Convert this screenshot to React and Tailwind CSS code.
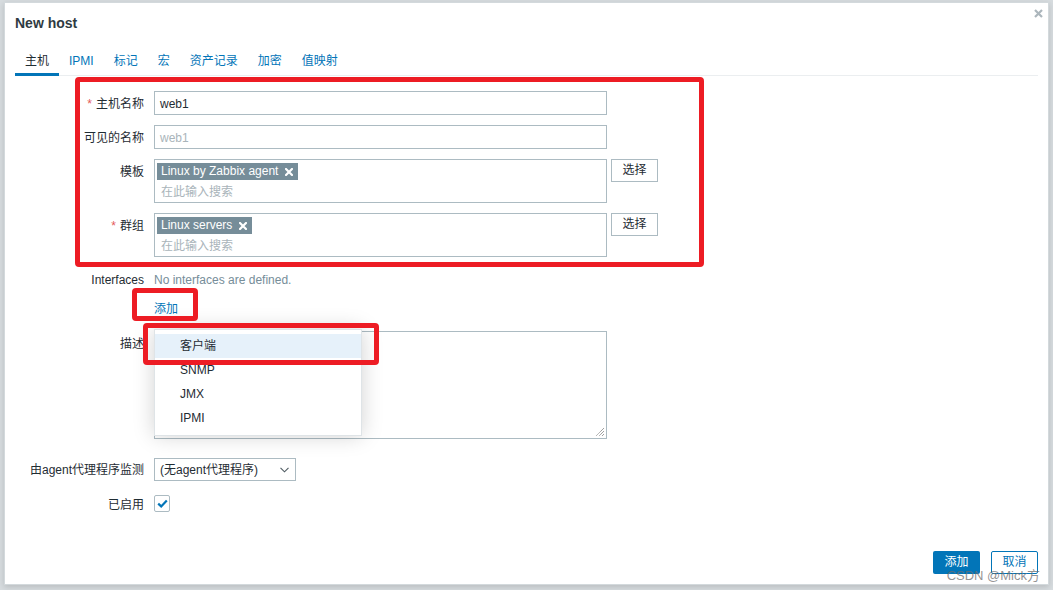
import React from 'react';

const Label = ({ children, required, className = '' }) => (
  <div className={`w-[129px] shrink-0 text-right leading-[16px] ${className}`}>
    {required && <span className="text-[#e45959] mr-[4px]">*</span>}
    {children}
  </div>
);

const Chip = ({ text }) => (
  <span className="inline-flex items-center h-[17px] bg-[#768d99] text-white pl-[4px] pr-[5px] leading-[17px]">
    {text}
    <svg width="8" height="8" viewBox="0 0 8 8" className="ml-[7px]">
      <path d="M1 1L7 7M7 1L1 7" stroke="white" strokeWidth="2.2" strokeLinecap="square" />
    </svg>
  </span>
);

const MultiSelect = ({ chip }) => (
  <div className="flex">
    <div className="w-[453px] h-[44px] border border-[#acbbc2] pt-[2px] pl-[2px]">
      <Chip text={chip} />
      <div className="pl-[4px] pt-[4px] leading-[16px] text-[#a9b4ba]">在此输入搜索</div>
    </div>
    <button className="ml-[4px] w-[47px] h-[23px] border border-[#acbbc2] bg-white text-[#1f2c33] leading-[21px]">
      选择
    </button>
  </div>
);

const RedBox = ({ className }) => (
  <div className={`absolute border-[5px] border-[#ed1c24] rounded-[4px] ${className}`} />
);

export default function App() {
  const tabs = ['主机', 'IPMI', '标记', '宏', '资产记录', '加密', '值映射'];
  const menu = ['客户端', 'SNMP', 'JMX', 'IPMI'];

  return (
    <div className="w-[1053px] h-[590px] overflow-hidden bg-[#d7dcdf] pt-[2px] pl-[4px] font-['Liberation_Sans','Noto_Sans_CJK_SC',sans-serif] text-[12px] text-[#1f2c33]">
      <div className="relative w-[1045px] h-[583px] bg-white border border-[#d3d9dc] flex flex-col px-[10px] shadow-[0_2px_6px_rgba(0,0,0,0.15)]">
        {/* header */}
        <div className="h-[39px] flex items-center pt-[1px]">
          <span className="text-[14px] font-bold text-[#2f3b42]">New host</span>
        </div>
        <svg width="9" height="9" viewBox="0 0 9 9" className="absolute right-[5px] top-[6px]">
          <path d="M1 1L8 8M8 1L1 8" stroke="#acb6bc" strokeWidth="2.2" />
        </svg>

        {/* tabs */}
        <div className="flex border-b border-[#ebeef0]">
          {tabs.map((t, i) => (
            <div
              key={t}
              className={`h-[34px] pt-[7px] px-[10px] flex items-center border-b-[3px] -mb-px ${
                i === 0 ? 'border-[#0275b8] text-[#1f2c33]' : 'border-transparent text-[#0275b8]'
              }`}
            >
              {t}
            </div>
          ))}
        </div>

        {/* form */}
        <div className="flex items-start gap-[10px] mt-[15px]">
          <Label required className="pt-[5px]">主机名称</Label>
          <div className="w-[453px] h-[24px] border border-[#acbbc2] px-[5px] pt-[1px] flex items-center">web1</div>
        </div>
        <div className="flex items-start gap-[10px] mt-[10px]">
          <Label className="pt-[5px]">可见的名称</Label>
          <div className="w-[453px] h-[24px] border border-[#acbbc2] px-[5px] pt-[1px] flex items-center text-[#a9b4ba]">web1</div>
        </div>
        <div className="flex items-start gap-[10px] mt-[10px]">
          <Label className="pt-[5px]">模板</Label>
          <MultiSelect chip="Linux by Zabbix agent" />
        </div>
        <div className="flex items-start gap-[10px] mt-[10px]">
          <Label required className="pt-[5px]">群组</Label>
          <MultiSelect chip="Linux servers" />
        </div>
        <div className="flex items-start gap-[10px] mt-[15px]">
          <Label>Interfaces</Label>
          <div className="leading-[16px] text-[#768d99]">No interfaces are defined.</div>
        </div>
        <div className="flex items-start gap-[10px] mt-[13px]">
          <Label />
          <div className="leading-[16px] text-[#0275b8]">添加</div>
        </div>
        <div className="flex items-start gap-[10px] mt-[14px]">
          <Label className="pt-[5px]">描述</Label>
          <div className="relative w-[453px] h-[108px] border border-[#acbbc2]">
            <svg width="10" height="10" viewBox="0 0 10 10" className="absolute right-[1px] bottom-[1px]">
              <path d="M9 1L1 9M9 4L4 9M9 7L7 9" stroke="#555" strokeWidth="0.8" strokeDasharray="1 0.6" />
            </svg>
          </div>
        </div>
        <div className="flex items-start gap-[10px] mt-[19px]">
          <Label className="pt-[4px]">由agent代理程序监测</Label>
          <div className="w-[142px] h-[23px] border border-[#acbbc2] pl-[5px] pr-[6px] pt-[1px] flex items-center justify-between">
            <span>(无agent代理程序)</span>
            <svg width="9" height="6" viewBox="0 0 9 6">
              <path d="M0.5 0.8L4.5 4.8L8.5 0.8" stroke="#4f5b62" strokeWidth="1.1" fill="none" />
            </svg>
          </div>
        </div>
        <div className="flex items-start gap-[10px] mt-[14px]">
          <Label className="pt-[2px]">已启用</Label>
          <div className="w-[16px] h-[17px] border border-[#acbbc2] rounded-[2px] flex items-center justify-center">
            <svg width="11" height="9" viewBox="0 0 11 9">
              <path d="M1.2 4.6L4.2 7.4L9.8 1.5" stroke="#0275b8" strokeWidth="2.2" fill="none" />
            </svg>
          </div>
        </div>

        {/* footer */}
        <div className="mt-auto pb-[10px] flex justify-end gap-[11px]">
          <button className="w-[47px] h-[23px] bg-[#0275b8] text-white rounded-[2px] leading-[23px]">添加</button>
          <button className="w-[47px] h-[23px] border border-[#0275b8] text-[#0275b8] bg-white rounded-[2px] leading-[21px]">
            取消
          </button>
        </div>

        {/* interface type menu */}
        <div className="absolute left-[149px] top-[326px] w-[208px] h-[107px] bg-white border border-[#dfe4e7] shadow-[0_0_20px_rgba(0,0,0,0.18)] pt-[4px]">
          {menu.map((m, i) => (
            <div
              key={m}
              className={`h-[24px] pl-[25px] flex items-center ${i === 0 ? 'bg-[#e6f1fa]' : ''}`}
            >
              {m}
            </div>
          ))}
        </div>

        {/* annotations */}
        <RedBox className="left-[70px] top-[74px] w-[629px] h-[190px]" />
        <RedBox className="left-[127px] top-[285px] w-[66px] h-[33px]" />
        <RedBox className="left-[138px] top-[320px] w-[236px] h-[42px]" />

        <div className="absolute right-[8px] bottom-[1px] text-[13px] leading-[15px] text-[rgba(110,110,110,0.75)]">
          CSDN @Mick方
        </div>
      </div>
    </div>
  );
}
